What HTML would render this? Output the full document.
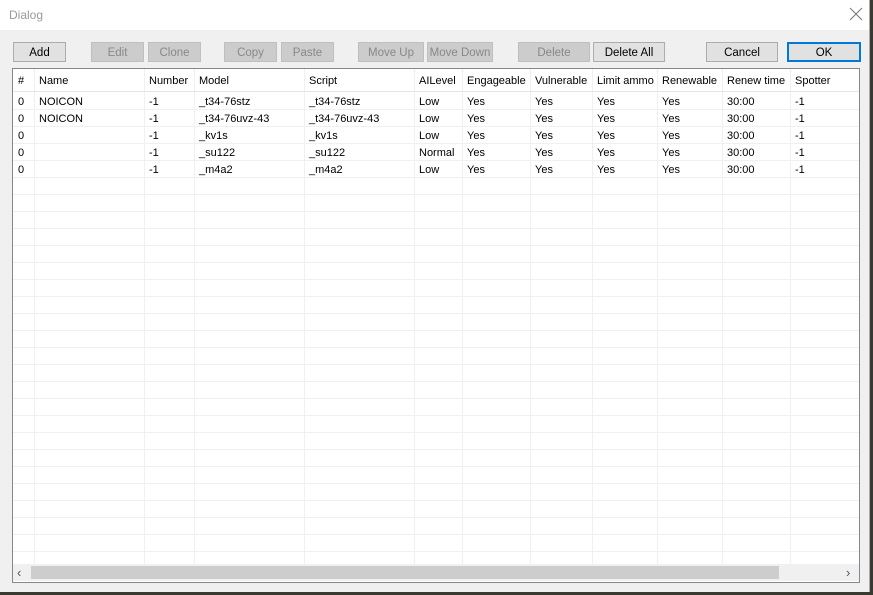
<!DOCTYPE html>
<html><head><style>
body{margin:0;width:873px;height:595px;background:#3a3a30;font-family:"Liberation Sans",sans-serif;font-size:11px;position:relative;overflow:hidden}
.win{position:absolute;left:0;top:0;width:869px;height:592px;background:#f0f0f0;border-right:1px solid #aaa}
.title{position:absolute;left:0;top:0;width:869px;height:30px;background:#fff;}
.title span{position:absolute;left:9px;top:8px;color:#999;font-size:12px}
.x{position:absolute;left:849px;top:7px;width:14px;height:14px}
.b{position:absolute;top:42px;height:18px;border:1px solid #adadad;background:#e1e1e1;text-align:center;line-height:21px;color:#000;font-size:11.5px}
.d{background:#ccc;border-color:#bfbfbf;color:#888}
.ok{border:2px solid #0078d7;height:16px;line-height:19px}
.tbl{position:absolute;left:12px;top:68px;width:846px;height:513px;border:1px solid #828790;background:#fff;overflow:hidden}
.v{position:absolute;top:0;height:496px;width:1px;background:#f0f0f0}
.h{position:absolute;left:0;width:846px;height:1px;background:#f0f0f0}
.t{position:absolute;white-space:nowrap}
.sb{position:absolute;left:0;top:495px;width:846px;height:17px;background:#f0f0f0}
.th{position:absolute;left:18px;top:2px;width:748px;height:13px;background:#cdcdcd}
</style></head><body>
<div class="win">
<div class="title"><span>Dialog</span>
<svg class="x" viewBox="0 0 14 14"><path d="M1 1L13 13M13 1L1 13" stroke="#777" stroke-width="1"/></svg></div>
<div class="b" style="left:13px;width:51px">Add</div>
<div class="b d" style="left:91px;width:51px">Edit</div>
<div class="b d" style="left:148px;width:51px">Clone</div>
<div class="b d" style="left:224px;width:51px">Copy</div>
<div class="b d" style="left:281px;width:51px">Paste</div>
<div class="b d" style="left:358px;width:64px">Move Up</div>
<div class="b d" style="left:427px;width:64px">Move Down</div>
<div class="b d" style="left:518px;width:70px">Delete</div>
<div class="b" style="left:593px;width:70px">Delete All</div>
<div class="b" style="left:706px;width:70px">Cancel</div>
<div class="b ok" style="left:787px;width:70px">OK</div>
<div class="tbl" id="tb"></div>
</div>
<script>
var cols=[0,21,131,181,291,401,449,517,579,644,709,777,846];
var hd=["#","Name","Number","Model","Script","AILevel","Engageable","Vulnerable","Limit ammo","Renewable","Renew time","Spotter"];
var rows=[["0","NOICON","-1","_t34-76stz","_t34-76stz","Low","Yes","Yes","Yes","Yes","30:00","-1"],
["0","NOICON","-1","_t34-76uvz-43","_t34-76uvz-43","Low","Yes","Yes","Yes","Yes","30:00","-1"],
["0","","-1","_kv1s","_kv1s","Low","Yes","Yes","Yes","Yes","30:00","-1"],
["0","","-1","_su122","_su122","Normal","Yes","Yes","Yes","Yes","30:00","-1"],
["0","","-1","_m4a2","_m4a2","Low","Yes","Yes","Yes","Yes","30:00","-1"]];
var h="";
for(var i=1;i<cols.length-1;i++)h+='<div class="v" style="left:'+cols[i]+'px"></div>';
h+='<div class="h" style="top:22px;background:#e5e5e5"></div>';
for(var y=40;y<496;y+=17)h+='<div class="h" style="top:'+y+'px"></div>';
for(var i=0;i<hd.length;i++)h+='<div class="t" style="left:'+(cols[i]+5)+'px;top:6px">'+hd[i]+'</div>';
rows.forEach(function(r,k){r.forEach(function(c,i){h+='<div class="t" style="left:'+(cols[i]+5)+'px;top:'+(27+17*k)+'px">'+c+'</div>';});});
h+='<div class="sb"><div class="th"></div><div class="t" style="left:4px;top:1px;color:#555;font-size:13px">&#8249;</div><div class="t" style="left:833px;top:1px;color:#555;font-size:13px">&#8250;</div></div>';
document.getElementById('tb').innerHTML=h;
</script>
</body></html>
